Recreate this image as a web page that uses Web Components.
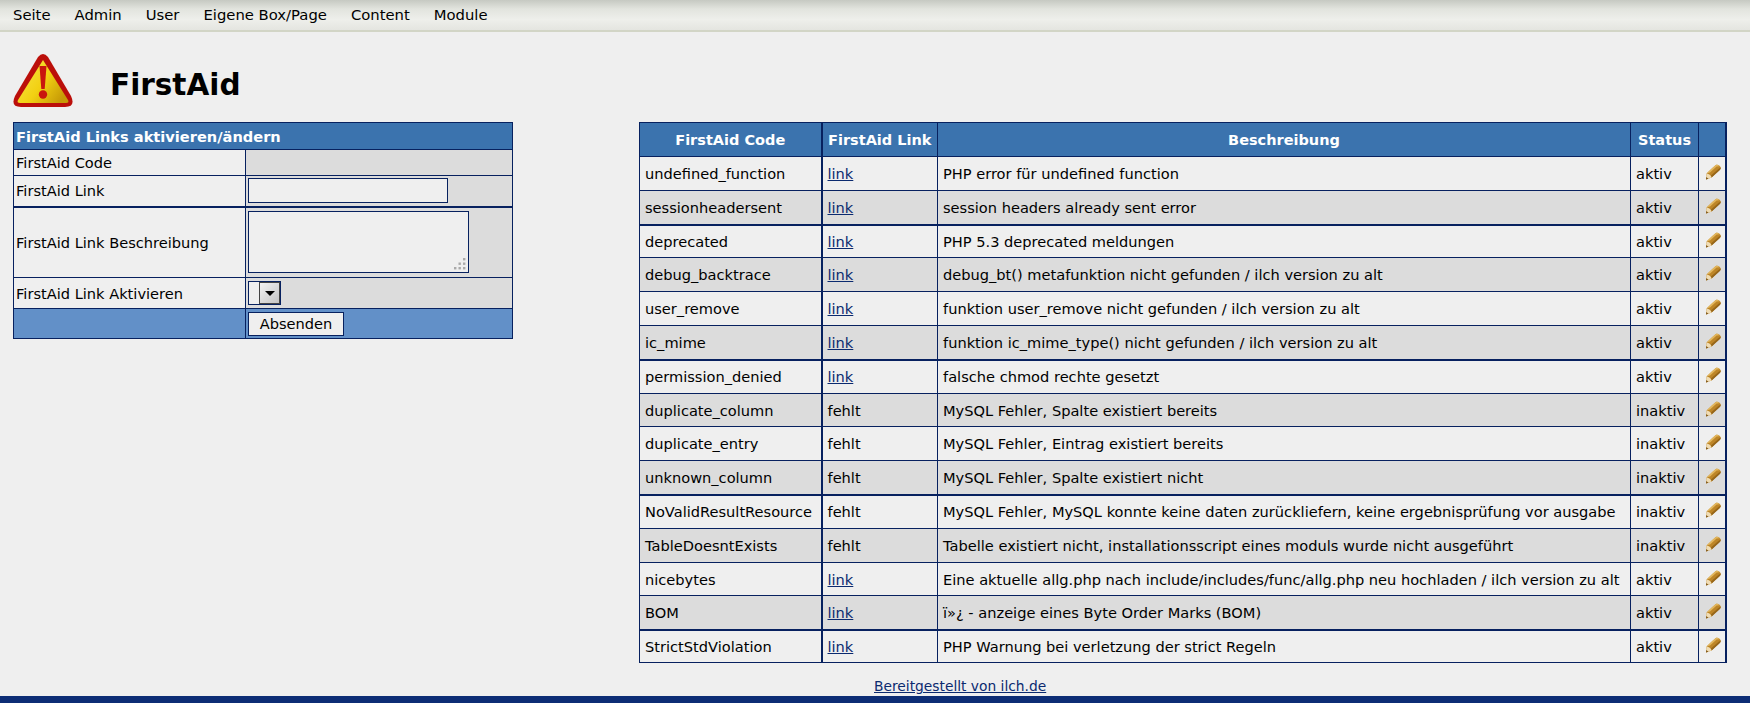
<!DOCTYPE html>
<html lang="de">
<head>
<meta charset="utf-8">
<title>FirstAid</title>
<style>
  html, body { margin: 0; padding: 0; }
  body {
    background: #efefef;
    color: #000;
    font: 14px "DejaVu Sans", Verdana, sans-serif;
    height: 703px;
    overflow: hidden;
    display: flex;
    flex-direction: column;
  }
</style>
</head>
<body>
<admin-menu></admin-menu>
<page-title>FirstAid</page-title>
<main-area>
  <firstaid-form slot="left"></firstaid-form>
  <firstaid-table slot="right"></firstaid-table>
</main-area>
<page-footer></page-footer>

<script>
// Hauptmenue oben
class AdminMenu extends HTMLElement {
  constructor() {
    super();
    this.attachShadow({ mode: 'open' });
  }
  connectedCallback() {
    const items = ['Seite', 'Admin', 'User', 'Eigene Box/Page', 'Content', 'Module'];
    this.shadowRoot.innerHTML = `
      <style>
        :host {
          display: flex;
          flex: none;
          gap: 24px;
          height: 28px;
          padding: 0 13px 2px;
          align-items: center;
          background: linear-gradient(#c6c9c2, #e2e4de 30%, #eeefeb 65%, #e4e5e0);
          border-bottom: 2px solid #d2d5c6;
          font-size: 14.8px;
        }
      </style>
      ${items.map(t => `<span>${t}</span>`).join('')}
    `;
  }
}

// Warnsymbol und Ueberschrift
class PageTitle extends HTMLElement {
  constructor() {
    super();
    this.attachShadow({ mode: 'open' });
  }
  connectedCallback() {
    this.shadowRoot.innerHTML = `
      <style>
        :host {
          display: flex;
          flex: none;
          align-items: flex-start;
          height: 90px;
          padding-left: 13px;
          font-size: 29.5px;
          font-weight: bold;
        }
        svg { width: 60px; height: 56px; margin: 21px 37px 0 0; flex: none; }
        span { margin-top: 35px; line-height: 36px; }
      </style>
      <svg viewBox="0 0 60 56">
        <defs>
          <linearGradient id="warn" x1="0" y1="0.1" x2="1" y2="0.7">
            <stop offset="0" stop-color="#f7e646"/>
            <stop offset="0.55" stop-color="#f2d012"/>
            <stop offset="1" stop-color="#c69a06"/>
          </linearGradient>
        </defs>
        <path d="M25 4 Q30 -2 35 4 L58 43 Q63 54 52 54 L8 54 Q-3 54 2 43 Z" fill="#bb0f0a"/>
        <path d="M30 7 L55 47 Q56.5 50 53 50 L7 50 Q3.5 50 5 47 Z" fill="url(#warn)"/>
        <path d="M26.5 13 h7 l-1.8 23 h-3.4 Z" fill="#c9160e"/>
        <circle cx="30" cy="41.5" r="4.2" fill="#c9160e"/>
      </svg>
      <span><slot></slot></span>
    `;
  }
}

// Zwei Spalten: Formular links, Liste rechts
class MainArea extends HTMLElement {
  constructor() {
    super();
    this.attachShadow({ mode: 'open' });
  }
  connectedCallback() {
    this.shadowRoot.innerHTML = `
      <style>
        :host {
          display: flex;
          flex: 1;
          justify-content: space-between;
          align-items: flex-start;
          padding: 0 23px 0 13px;
        }
      </style>
      <slot name="left"></slot>
      <slot name="right"></slot>
    `;
  }
}

class FirstaidForm extends HTMLElement {
  constructor() {
    super();
    this.attachShadow({ mode: 'open' });
  }
  connectedCallback() {
    this.shadowRoot.innerHTML = `
      <style>
        :host { display: block; width: 500px; }
        table { border-collapse: collapse; width: 500px; table-layout: fixed; }
        td { border: 1px solid #07215f; padding: 0 2px; font-size: 14.6px; box-sizing: border-box; white-space: nowrap; }
        .head { background: #3b73ae; color: #fff; font-weight: bold; height: 27px; font-size: 14.6px; padding-top: 1px; }
        .a { background: #efefef; }
        .b { background: #dcdcdc; }
        .foot { background: #6290c8; }
        .thick td { border-bottom-width: 2px; }
        input, textarea, button {
          display: block;
          box-sizing: border-box;
          background: #efefef;
          border: 1px solid #07215f;
          border-radius: 0;
          margin: 0;
          padding: 0;
          font: inherit;
          outline: none;
        }
        input { width: 200px; height: 25px; }
        .area { position: relative; width: 221px; height: 62px; }
        textarea { width: 221px; height: 62px; resize: none; }
        .grip { position: absolute; right: 2px; bottom: 2px; width: 14px; height: 14px; }
        .sel {
          box-sizing: border-box;
          width: 33px;
          height: 24px;
          background: #efefef;
          border: 1px solid #07215f;
          display: flex;
          justify-content: flex-end;
        }
        .sel i {
          box-sizing: border-box;
          width: 21px;
          background: linear-gradient(135deg, #f2f2f2, #c4c4c4);
          border: 1px solid #444;
          display: flex;
          align-items: center;
          justify-content: center;
        }
        .sel i::after {
          content: "";
          border: 5px solid transparent;
          border-top: 5px solid #000;
          border-bottom: 0;
        }
        button { width: 96px; height: 24px; color: #000; }
      </style>
      <table>
        <colgroup><col style="width:232px"><col></colgroup>
        <tr><td class="head" colspan="2">FirstAid Links aktivieren/ändern</td></tr>
        <tr style="height:26px"><td class="a">FirstAid Code</td><td class="b"></td></tr>
        <tr class="thick" style="height:31px"><td class="a">FirstAid Link</td><td class="b"><input type="text"></td></tr>
        <tr style="height:71px"><td class="a">FirstAid Link Beschreibung</td><td class="b">
          <div class="area"><textarea></textarea>
            <svg class="grip" viewBox="0 0 14 14" fill="#aaa">
              <rect x="10" y="1" width="2.4" height="2.4"/>
              <rect x="5.5" y="5.5" width="2.4" height="2.4"/><rect x="10" y="5.5" width="2.4" height="2.4"/>
              <rect x="1" y="10" width="2.4" height="2.4"/><rect x="5.5" y="10" width="2.4" height="2.4"/><rect x="10" y="10" width="2.4" height="2.4"/>
            </svg>
          </div></td></tr>
        <tr style="height:31px"><td class="a">FirstAid Link Aktivieren</td><td class="b"><div class="sel"><i></i></div></td></tr>
        <tr style="height:30px"><td class="foot"></td><td class="foot"><button type="button">Absenden</button></td></tr>
      </table>
    `;
  }
}

class FirstaidTable extends HTMLElement {
  constructor() {
    super();
    this.attachShadow({ mode: 'open' });
  }
  connectedCallback() {
    // [code, hat link, beschreibung, status, zeilenhoehe]
    const rows = [
      ['undefined_function', 1, 'PHP error für undefined function', 'aktiv', 34],
      ['sessionheadersent', 1, 'session headers already sent error', 'aktiv', 34],
      ['deprecated', 1, 'PHP 5.3 deprecated meldungen', 'aktiv', 33],
      ['debug_backtrace', 1, 'debug_bt() metafunktion nicht gefunden / ilch version zu alt', 'aktiv', 34],
      ['user_remove', 1, 'funktion user_remove nicht gefunden / ilch version zu alt', 'aktiv', 34],
      ['ic_mime', 1, 'funktion ic_mime_type() nicht gefunden / ilch version zu alt', 'aktiv', 34],
      ['permission_denied', 1, 'falsche chmod rechte gesetzt', 'aktiv', 34],
      ['duplicate_column', 0, 'MySQL Fehler, Spalte existiert bereits', 'inaktiv', 33],
      ['duplicate_entry', 0, 'MySQL Fehler, Eintrag existiert bereits', 'inaktiv', 34],
      ['unknown_column', 0, 'MySQL Fehler, Spalte existiert nicht', 'inaktiv', 34],
      ['NoValidResultResource', 0, 'MySQL Fehler, MySQL konnte keine daten zurückliefern, keine ergebnisprüfung vor ausgabe', 'inaktiv', 34],
      ['TableDoesntExists', 0, 'Tabelle existiert nicht, installationsscript eines moduls wurde nicht ausgeführt', 'inaktiv', 34],
      ['nicebytes', 1, 'Eine aktuelle allg.php nach include/includes/func/allg.php neu hochladen / ilch version zu alt', 'aktiv', 33],
      ['BOM', 1, 'ï»¿ - anzeige eines Byte Order Marks (BOM)', 'aktiv', 34],
      ['StrictStdViolation', 1, 'PHP Warnung bei verletzung der strict Regeln', 'aktiv', 33],
    ];
    // diese zeilen haben unten eine dickere linie
    const thick = [1, 5, 9, 13];
    const pencil = `<svg viewBox="0 0 16 16" width="16" height="16">
      <path d="M10.8 1 C12.6 0 15.6 1.6 15.8 3.8 C15.9 5 14.8 6 14 6.8 L6.6 13.4 L1 15.6 L1.6 9.6 Z" fill="#bd8527"/>
      <path d="M10.8 1 C8.6 2.6 3.6 7.2 1.6 9.6 L5 8.6 L11.6 2.6 L14.6 2.2 C13.4 1 12 0.4 10.8 1 Z" fill="#e2b65e"/>
      <path d="M14 6.8 L6.6 13.4 L6 11.6 L13.4 5 L15.7 3.4 C15.9 5 14.8 6 14 6.8 Z" fill="#96661a"/>
      <path d="M1.6 9.6 L1 15.6 L6.6 13.4 C6 11.4 4 9.8 1.6 9.6 Z" fill="#f0dcb4"/>
      <path d="M1.2 13 L1 15.6 L3.4 14.7 Z" fill="#7d5414"/>
    </svg>`;
    this.shadowRoot.innerHTML = `
      <style>
        :host { display: block; width: 1088px; }
        table { border-collapse: collapse; width: 1088px; table-layout: fixed; border-right: 2px solid #07215f; }
        th, td { border: 1px solid #07215f; padding: 0 5px; font-size: 14.6px; box-sizing: border-box; white-space: nowrap; }
        th { background: #3b73ae; color: #fff; height: 34px; font-size: 14.5px; }
        th:first-child, td:first-child { border-right-width: 2px; }
        tr.a td { background: #efefef; }
        tr.b td { background: #dcdcdc; }
        tr.thick td { border-bottom-width: 2px; }
        a { color: #0b2a6f; text-decoration: underline; }
        td.ic { padding: 0; }
        td.ic svg { display: block; margin: 0 auto 3px; position: relative; left: 1px; }
      </style>
      <table>
        <colgroup><col style="width:182px"><col style="width:116px"><col style="width:693px"><col style="width:68px"><col></colgroup>
        <tr><th>FirstAid Code</th><th>FirstAid Link</th><th>Beschreibung</th><th>Status</th><th></th></tr>
        ${rows.map((r, i) => `<tr class="${i % 2 ? 'b' : 'a'}${thick.includes(i) ? ' thick' : ''}" style="height:${r[4]}px">
          <td>${r[0]}</td>
          <td>${r[1] ? '<a href="#">link</a>' : 'fehlt'}</td>
          <td>${r[2]}</td>
          <td>${r[3]}</td>
          <td class="ic">${pencil}</td>
        </tr>`).join('')}
      </table>
    `;
  }
}

class PageFooter extends HTMLElement {
  constructor() {
    super();
    this.attachShadow({ mode: 'open' });
  }
  connectedCallback() {
    this.shadowRoot.innerHTML = `
      <style>
        :host {
          display: flex;
          flex: none;
          flex-direction: column;
          font-size: 13.8px;
        }
        div { padding-left: 874px; line-height: 20px; }
        a { color: #0b2a6f; text-decoration: underline; }
        i { display: block; height: 7px; background: #0d2d75; }
      </style>
      <div><a href="#">Bereitgestellt von ilch.de</a></div>
      <i></i>
    `;
  }
}

customElements.define('admin-menu', AdminMenu);
customElements.define('page-title', PageTitle);
customElements.define('main-area', MainArea);
customElements.define('firstaid-form', FirstaidForm);
customElements.define('firstaid-table', FirstaidTable);
customElements.define('page-footer', PageFooter);
</script>
</body>
</html>
